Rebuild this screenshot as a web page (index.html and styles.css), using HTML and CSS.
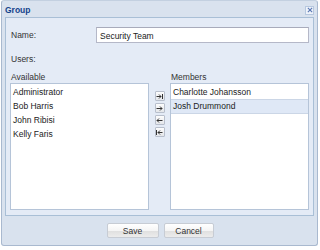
FILE: index.html
```html
<!DOCTYPE html>
<html lang="en">
<head>
    <meta charset="UTF-8">
    <title>Group</title>
    <link rel="stylesheet" href="styles.css">
</head>
<body>

    <div class="window">
        <!-- Title bar -->
        <div class="title-bar">
            <span class="title">Group</span>
            <span class="close-btn">
                <svg width="7" height="7" viewBox="0 0 7 7"><path d="M1 1 L6 6 M6 1 L1 6" stroke="#5a78b4" stroke-width="1.3"/></svg>
            </span>
        </div>

        <div class="panel">
            <div class="name-row">
                <label class="label">Name:</label>
                <div class="text-input">Security Team</div>
            </div>
            <div class="label users">Users:</div>

            <div class="selector">
                <div class="col">
                    <div class="label">Available</div>
                    <ul class="list">
                        <li>Administrator</li>
                        <li>Bob Harris</li>
                        <li>John Ribisi</li>
                        <li>Kelly Faris</li>
                    </ul>
                </div>

                <div class="moves">
                    <span class="move">
                        <svg width="7" height="7" viewBox="0 0 7 7"><path d="M0.5 3.5 H5 M3 1.5 L5 3.5 L3 5.5" stroke="#333" fill="none"/><path d="M6.5 1 V6" stroke="#333"/></svg>
                    </span>
                    <span class="move">
                        <svg width="7" height="7" viewBox="0 0 7 7"><path d="M0.5 3.5 H6 M4 1.5 L6 3.5 L4 5.5" stroke="#333" fill="none"/></svg>
                    </span>
                    <span class="move">
                        <svg width="7" height="7" viewBox="0 0 7 7"><path d="M6.5 3.5 H1 M3 1.5 L1 3.5 L3 5.5" stroke="#333" fill="none"/></svg>
                    </span>
                    <span class="move">
                        <svg width="7" height="7" viewBox="0 0 7 7"><path d="M6.5 3.5 H2 M4 1.5 L2 3.5 L4 5.5" stroke="#333" fill="none"/><path d="M0.5 1 V6" stroke="#333"/></svg>
                    </span>
                </div>

                <div class="col">
                    <div class="label">Members</div>
                    <ul class="list">
                        <li>Charlotte Johansson</li>
                        <li class="selected">Josh Drummond</li>
                    </ul>
                </div>
            </div>
        </div>

        <div class="footer">
            <button class="btn">Save</button>
            <button class="btn">Cancel</button>
        </div>
    </div>

</body>
</html>
```

FILE: styles.css
```css
body {
    margin: 0;
    background: #ffffff;
    font-family: "Liberation Sans", Arial, sans-serif;
    font-size: 8.5px;
    color: #222;
}

.window {
    width: 317px;
    height: 246px;
    margin: 0 0 0 1px;
    box-sizing: border-box;
    border: 1px solid #a9b9cf;
    border-top-color: #c3d0e0;
    border-radius: 3px;
    background: #d9e2ee;
    display: flex;
    flex-direction: column;
}

/* title bar */
.title-bar {
    height: 16px;
    display: flex;
    align-items: center;
    justify-content: space-between;
    padding: 0 3px 0 3px;
}

.title {
    font-weight: bold;
    color: #15428b;
    font-size: 8.5px;
    margin-top: 1px;
}

.close-btn {
    width: 9px;
    height: 9px;
    box-sizing: border-box;
    border: 1px solid #b7c8df;
    background: #eef3fa;
    display: flex;
    align-items: center;
    justify-content: center;
    margin-top: 2px;
}

.close-btn svg {
    width: 6px;
    height: 6px;
}

/* main panel */
.panel {
    height: 199px;
    margin: 0 3px;
    box-sizing: border-box;
    border: 1px solid #a9bfd6;
    background: #e4ebf6;
    padding: 9px 4px 0 4px;
}

.label {
    color: #333;
}

.name-row {
    display: flex;
    align-items: center;
    height: 16px;
}

.name-row .label {
    width: 85px;
    padding-left: 1px;
}

.text-input {
    flex: 1;
    height: 16px;
    box-sizing: border-box;
    border: 1px solid #b5b8c8;
    border-top-color: #a8abbb;
    background: #fff;
    padding: 3px 3px 0 3px;
    color: #222;
}

.users {
    margin-top: 11px;
    padding-left: 1px;
}

.selector {
    display: flex;
    margin-top: 8px;
}

.col {
    flex: 1;
    display: flex;
    flex-direction: column;
}

.col .label {
    padding-left: 1px;
    height: 11px;
}

.list {
    list-style: none;
    margin: 0;
    padding: 1px 0 0 0;
    height: 127px;
    box-sizing: border-box;
    border: 1px solid #b5c4d8;
    background: #fff;
}

.list li {
    height: 13px;
    line-height: 13px;
    padding-left: 2px;
    color: #222;
    border-top: 1px solid transparent;
}

.list li.selected {
    background: #dfe8f6;
    border-top-color: #cbd6e6;
    border-bottom: 1px solid #cbd6e6;
}

/* move buttons */
.moves {
    width: 21px;
    display: flex;
    flex-direction: column;
    align-items: center;
    gap: 2px;
    padding-top: 19px;
}

.move {
    width: 10px;
    height: 10px;
    box-sizing: border-box;
    border: 1px solid #b8bfcc;
    border-radius: 1px;
    background: linear-gradient(#fdfdfd, #e4e6ea);
    display: flex;
    align-items: center;
    justify-content: center;
}

/* footer */
.footer {
    flex: 1;
    display: flex;
    justify-content: center;
    align-items: flex-start;
    gap: 5px;
    padding-top: 7px;
    padding-left: 1px;
}

.btn {
    width: 52px;
    height: 15px;
    padding: 0;
    font-family: "Liberation Sans", Arial, sans-serif;
    font-size: 8.5px;
    color: #333;
    border: 1px solid #c7ccd4;
    border-radius: 2px;
    background: linear-gradient(#ffffff 0%, #f4f4f4 55%, #e0e0e0 56%, #ececec 100%);
}

.btn + .btn {
    width: 50px;
}
```
